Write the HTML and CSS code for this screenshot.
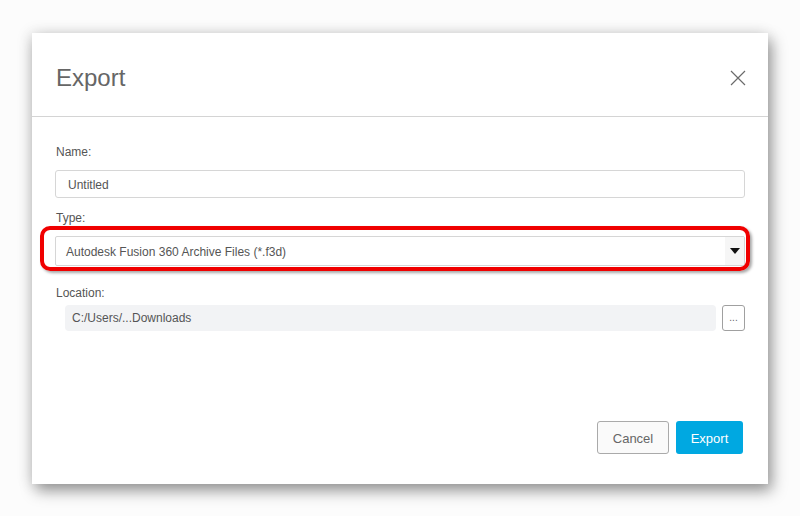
FILE: index.html
```html
<!DOCTYPE html>
<html lang="en">
<head>
  <meta charset="UTF-8">
  <title>Export</title>
  <link rel="stylesheet" href="styles.css">
</head>
<body>
  <div class="dialog">
    <div class="dialog-header">
      <h1>Export</h1>
      <button class="close-btn" aria-label="Close">
        <svg width="16" height="16" viewBox="0 0 16 16"><path d="M1 1L15 15M15 1L1 15" stroke="#6b6b6b" stroke-width="1.2" fill="none"/></svg>
      </button>
    </div>
    <div class="dialog-body">
      <label class="field-label">Name:</label>
      <input class="text-input" type="text" value="Untitled">

      <label class="field-label type-label">Type:</label>
      <div class="select-wrap">
        <div class="select-box">
          <span class="select-text">Autodesk Fusion 360 Archive Files (*.f3d)</span>
          <span class="select-arrow"><svg width="10" height="6" viewBox="0 0 10 6"><path d="M0 0H10L5 6Z" fill="#111"/></svg></span>
        </div>
        <div class="highlight"></div>
      </div>

      <label class="field-label location-label">Location:</label>
      <div class="location-row">
        <div class="location-field">C:/Users/...Downloads</div>
        <button class="browse-btn">...</button>
      </div>
    </div>
    <div class="dialog-footer">
      <button class="btn btn-cancel">Cancel</button>
      <button class="btn btn-export">Export</button>
    </div>
  </div>
</body>
</html>
```

FILE: styles.css
```css
html, body {
  margin: 0;
  height: 100%;
}
body {
  font-family: "Liberation Sans", Arial, sans-serif;
  background-color: #fcfcfc;
  padding: 33px 0 0 32px;
  box-sizing: border-box;
}
.dialog {
  width: 736px;
  height: 451px;
  background: #fff;
  display: flex;
  flex-direction: column;
  box-shadow: 4px 7px 14px rgba(0, 0, 0, 0.38), -2px 0 14px rgba(0, 0, 0, 0.12);
}
.dialog-header {
  height: 83px;
  border-bottom: 1px solid #d4d4d4;
  display: flex;
  align-items: center;
  justify-content: space-between;
  padding: 0 22px 0 24px;
}
.dialog-header h1 {
  margin: 0;
  font-size: 24px;
  font-weight: normal;
  color: #666;
  padding-top: 6px;
}
.close-btn {
  background: none;
  border: none;
  padding: 0;
  width: 16px;
  height: 16px;
  cursor: pointer;
  margin-top: 6px;
}
.dialog-body {
  flex: 1;
  padding: 28px 23px 0 23px;
  display: flex;
  flex-direction: column;
}
.field-label {
  display: block;
  font-size: 12px;
  line-height: 14px;
  color: #555;
  margin: 0 0 11px 1px;
}
.type-label {
  margin-top: 13px;
}
.location-label {
  margin-top: 20px;
  margin-bottom: 5px;
}
.text-input {
  height: 28px;
  box-sizing: border-box;
  border: 1px solid #d6d6d6;
  border-radius: 3px;
  padding: 1px 12px 0;
  font-family: inherit;
  font-size: 12px;
  color: #555;
  outline: none;
}
.select-wrap {
  position: relative;
}
.select-box {
  height: 30px;
  box-sizing: border-box;
  border: 1px solid #d6d6d6;
  border-radius: 2px;
  display: flex;
  align-items: center;
  justify-content: space-between;
  font-size: 12px;
  color: #555;
}
.select-text {
  padding: 1px 0 0 10px;
}
.select-arrow {
  width: 19px;
  height: 100%;
  background: #f6f6f6;
  display: flex;
  align-items: center;
  justify-content: center;
}
.highlight {
  position: absolute;
  top: -10px;
  left: -15px;
  right: -5px;
  bottom: -5px;
  border: 4px solid #f00000;
  border-radius: 10px;
  box-shadow: 2px 2px 3px rgba(0, 0, 0, 0.35);
  pointer-events: none;
}
.location-row {
  display: flex;
  gap: 6px;
  padding-left: 10px;
}
.location-field {
  flex: 1;
  height: 26px;
  background: #f2f3f5;
  border-radius: 4px;
  font-size: 12px;
  color: #555;
  line-height: 27px;
  padding-left: 7px;
}
.browse-btn {
  width: 23px;
  height: 26px;
  border: 1px solid #a0a0a0;
  border-radius: 3px;
  background: #fff;
  color: #666;
  font-size: 10px;
  padding: 0;
  line-height: 24px;
}
.dialog-footer {
  display: flex;
  justify-content: flex-end;
  gap: 7px;
  padding: 0 25px 30px 0;
}
.btn {
  height: 33px;
  border-radius: 3px;
  font-family: inherit;
  font-size: 13px;
  cursor: pointer;
  padding-top: 2px;
}
.btn-cancel {
  width: 72px;
  border: 1px solid #aaa;
  background: #fafafa;
  color: #666;
}
.btn-export {
  width: 67px;
  border: none;
  background: #00a8e1;
  color: #fff;
}
```
